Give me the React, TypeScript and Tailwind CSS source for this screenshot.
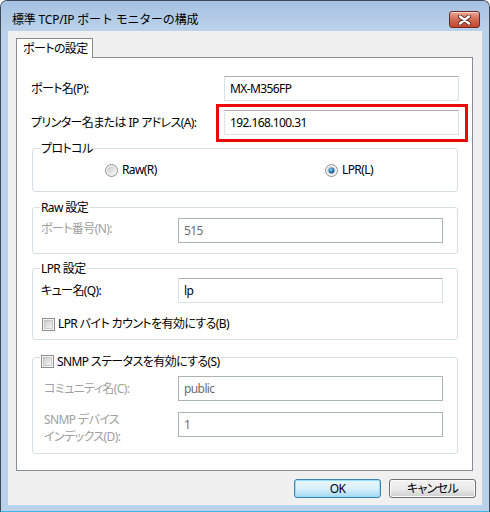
import React from 'react';

const FONT = "font-['Noto_Sans','Noto_Sans_CJK_JP',sans-serif] [font-feature-settings:'palt'] tracking-[-0.6px] font-normal";

function TextBox({ value, disabled, className = '' }: { value: string; disabled?: boolean; className?: string }) {
  return (
    <div
      className={`h-[25px] flex items-center pl-[5px] text-[12px] bg-white border shrink-0 ${
        disabled ? 'border-[#adb2b5] text-[#6d6d6d]' : 'border-[#dde2e8] border-t-[#abadb3] text-black'
      } ${className}`}
    >
      {value}
    </div>
  );
}

function Radio({ checked }: { checked?: boolean }) {
  return (
    <svg width="13" height="13" viewBox="0 0 13 13" className="shrink-0">
      <defs>
        <linearGradient id="rg" x1="0" y1="0" x2="1" y2="1">
          <stop offset="0" stopColor="#c9c9c9" />
          <stop offset="1" stopColor="#f7f7f7" />
        </linearGradient>
        <radialGradient id="rd" cx="0.4" cy="0.35" r="0.7">
          <stop offset="0" stopColor="#8fd0f5" />
          <stop offset="0.6" stopColor="#2a7ab8" />
          <stop offset="1" stopColor="#0f3f6e" />
        </radialGradient>
      </defs>
      <circle cx="6.5" cy="6.5" r="6" fill="#f4f4f4" stroke="#8e8f8f" />
      <circle cx="6.5" cy="6.5" r="4.3" fill="url(#rg)" />
      {checked && <circle cx="6.5" cy="6.5" r="3" fill="url(#rd)" />}
    </svg>
  );
}

function Check() {
  return (
    <svg width="13" height="13" viewBox="0 0 13 13" className="shrink-0">
      <defs>
        <linearGradient id="cg" x1="0" y1="0" x2="1" y2="1">
          <stop offset="0" stopColor="#cbcbcb" />
          <stop offset="1" stopColor="#f6f6f6" />
        </linearGradient>
      </defs>
      <rect x="0.5" y="0.5" width="12" height="12" fill="#f4f4f4" stroke="#8e8f8f" />
      <rect x="2.5" y="2.5" width="8" height="8" fill="url(#cg)" stroke="#b4b4b4" strokeWidth="0.6" />
    </svg>
  );
}

function Group({ legend, className = '', children }: { legend: React.ReactNode; className?: string; children?: React.ReactNode }) {
  return (
    <div className={`relative mx-[1px] border border-[#d5dfe5] rounded-[3px] ${className}`}>
      <div className="absolute left-[7px] -top-[9px] h-[17px] flex items-center bg-white px-[1px] text-[12px] text-black leading-none">
        {legend}
      </div>
      {children}
    </div>
  );
}

export default function App() {
  return (
    <div className={`w-[490px] h-[512px] ${FONT}`}>
      <div className="w-[490px] h-[512px] flex flex-col bg-[#b9d1ea] border border-[#3d4a57] border-b-[#3cb8e4] rounded-t-[7px] overflow-hidden">
        {/* title bar */}
        <div className="h-[30px] shrink-0 flex items-start bg-gradient-to-b from-[#a6c1e1] to-[#bbd2ea]">
          <div className="pl-[11px] pt-[11px] text-[12px] leading-[16px] text-black tracking-[-0.2px] [font-feature-settings:normal]">
            標準 TCP/IP ポート モニターの構成
          </div>
          <div className="ml-auto mr-[9px] mt-[10px] w-[31px] h-[17px] rounded-[3px] border border-[#6e2a22] bg-gradient-to-b from-[#e9a797] via-[#d26a54] to-[#c3452d] flex items-center justify-center shadow-[inset_0_1px_0_rgba(255,255,255,0.5)]">
            <svg width="13" height="10" viewBox="0 0 13 10">
              <path d="M2 1.5 L11 8.5 M11 1.5 L2 8.5" stroke="#5b2a24" strokeWidth="4.2" strokeLinecap="round" />
              <path d="M2 1.5 L11 8.5 M11 1.5 L2 8.5" stroke="#ffffff" strokeWidth="2.4" strokeLinecap="round" />
            </svg>
          </div>
        </div>

        {/* client */}
        <div className="mx-[7px] h-[474px] shrink-0 bg-[#f0f0f0] flex flex-col">
          <div className="ml-[8px] mt-[7px] flex">
            <div className="relative z-10 -mb-[1px] w-[77px] h-[20px] bg-white border border-b-0 border-[#898c95] flex items-center pl-[6px] text-[12px] text-black">
              ポートの設定
            </div>
          </div>
          <div className="ml-[8px] w-[457px] h-[414px] shrink-0 border border-[#898c95] bg-white flex flex-col pl-[14px] pr-[13px] text-[12px] text-black">
            <div className="mt-[18px] flex items-center justify-between">
              <span>ポート名(P):</span>
              <TextBox value="MX-M356FP" className="w-[235px]" />
            </div>
            <div className="relative mt-[9px] flex items-center justify-between">
              <span>プリンター名または IP アドレス(A):</span>
              <TextBox value="192.168.100.31" className="w-[235px]" />
              <div className="absolute left-[185px] -right-[9px] -top-[6px] -bottom-[7px] border-[3px] border-[#ea0a0a]" />
            </div>

            <Group legend="プロトコル" className="mt-[13px] h-[44px] flex items-center">
              <div className="flex items-center pl-[72px]">
                <div className="w-[220px] flex items-center gap-[4px]">
                  <Radio />
                  <span>Raw(R)</span>
                </div>
                <div className="flex items-center gap-[4px]">
                  <Radio checked />
                  <span>LPR(L)</span>
                </div>
              </div>
            </Group>

            <Group legend="Raw 設定" className="mt-[15px] h-[47px] pt-[10px] pl-[8px] pr-[14px]">
              <div className="flex items-center justify-between">
                <span className="text-[#a0a0a0] -mt-[3px]">ポート番号(N):</span>
                <TextBox value="515" disabled className="w-[265px]" />
              </div>
            </Group>

            <Group legend="LPR 設定" className="mt-[14px] h-[72px] pt-[9px] pl-[8px] pr-[14px]">
              <div className="flex items-center justify-between">
                <span>キュー名(Q):</span>
                <TextBox value="lp" className="w-[265px]" />
              </div>
              <div className="mt-[13px] h-[16px] flex items-center gap-[3px] pl-[1px]">
                <Check />
                <span>LPR バイト カウントを有効にする(B)</span>
              </div>
            </Group>

            <Group
              legend={
                <div className="flex items-center gap-[3px] pt-[8px]">
                  <Check />
                  <span>SNMP ステータスを有効にする(S)</span>
                </div>
              }
              className="mt-[17px] h-[97px] pt-[18px] pl-[11px] pr-[14px]"
            >
              <div className="flex items-center justify-between">
                <span className="text-[#a0a0a0]">コミュニティ名(C):</span>
                <TextBox value="public" disabled className="w-[265px]" />
              </div>
              <div className="mt-[11px] flex items-start justify-between">
                <span className="text-[#a0a0a0] leading-[17px] -mt-[1px]">
                  SNMP デバイス
                  <br />
                  インデックス(D):
                </span>
                <TextBox value="1" disabled className="w-[265px]" />
              </div>
            </Group>
          </div>

          <div className="mt-[8px] flex justify-end gap-[8px] pr-[6px] text-[12px] text-black">
            <div className="w-[87px] h-[19px] rounded-[3px] border border-[#3c7fb1] bg-gradient-to-b from-[#eaf6fd] via-[#d9f0fc] to-[#a7d9f5] flex items-center justify-center shadow-[inset_0_0_0_1px_#94e0fa]">
              OK
            </div>
            <div className="w-[87px] h-[19px] rounded-[3px] border border-[#707070] bg-gradient-to-b from-[#f2f2f2] via-[#ebebeb] to-[#cfcfcf] flex items-center justify-center shadow-[inset_0_0_0_1px_#fcfcfc]">
              キャンセル
            </div>
          </div>
        </div>
      </div>
    </div>
  );
}
